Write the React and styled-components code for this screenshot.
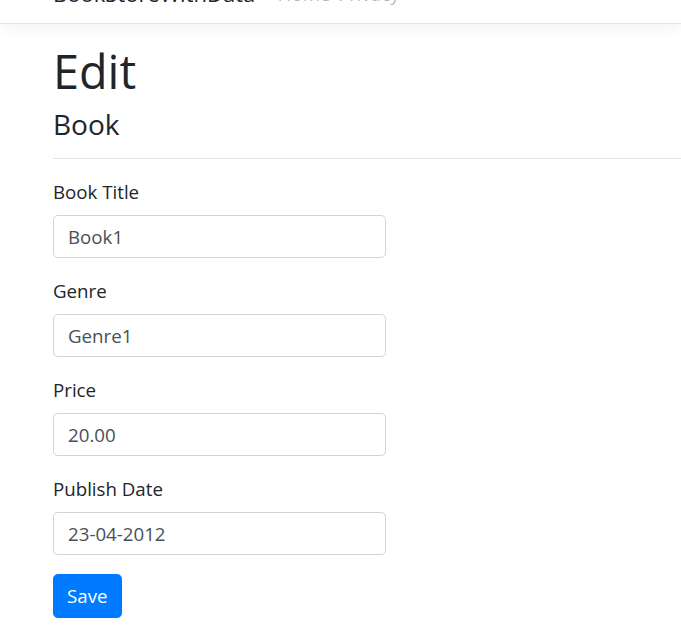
import React from "react";
import styled, { createGlobalStyle } from "styled-components";

const GlobalStyle = createGlobalStyle`
  html {
    font-size: 18.7px;
  }
  body {
    margin: 0;
    background: #fff;
    color: #212529;
    font-family: "Open Sans", "Noto Sans", "Liberation Sans", sans-serif;
    line-height: 1.5;
  }
  * {
    box-sizing: border-box;
  }
`;

const Header = styled.header`
  margin-top: -39px;
  background: #fff;
  border-bottom: 1px solid #e5e5e5;
  box-shadow: 0 0.25rem 0.75rem rgba(0, 0, 0, 0.05);
  margin-bottom: 1rem;
`;

const Nav = styled.nav`
  display: flex;
  align-items: center;
  padding: 0.5rem 0 6px 53px;
`;

const Brand = styled.a`
  font-size: 22px;
  line-height: 35px;
  padding: 0.3125rem 0;
  margin-right: 1rem;
  color: #212529;
  text-decoration: none;
`;

const NavLink = styled.a`
  color: rgba(0, 0, 0, 0.3);
  padding: 0.5rem 0.2rem;
  text-decoration: none;
`;

const Main = styled.main`
  padding: 0 0 1rem 53px;
`;

const Title = styled.h1`
  font-size: 2.5rem;
  font-weight: 400;
  line-height: 1.2;
  margin: 0 0 0.5rem;
`;

const Subtitle = styled.h4`
  font-size: 1.5rem;
  font-weight: 400;
  line-height: 1.2;
  margin: 0 0 0.5rem;
`;

const Rule = styled.hr`
  border: 0;
  border-top: 1px solid rgba(0, 0, 0, 0.1);
  margin: 16px 0 1rem;
`;

const Form = styled.form`
  width: 333px;
`;

const Group = styled.div`
  margin-bottom: 1rem;
`;

const Label = styled.label`
  display: inline-block;
  margin-bottom: 0.5rem;
`;

const Input = styled.input`
  display: block;
  width: 100%;
  height: 43px;
  padding: 0.375rem 0.75rem;
  font: inherit;
  font-size: 1rem;
  color: #495057;
  background: #fff;
  border: 1px solid #ced4da;
  border-radius: 0.25rem;
  outline: none;
`;

const Button = styled.button`
  font: inherit;
  font-size: 1rem;
  color: #fff;
  background: #007bff;
  border: 1px solid #007bff;
  border-radius: 0.25rem;
  padding: 0.375rem 0.7rem;
  line-height: 1.5;
`;

const BackLink = styled.a`
  color: #007bff;
  text-decoration: none;
`;

const fields = [
  { label: "Book Title", value: "Book1" },
  { label: "Genre", value: "Genre1" },
  { label: "Price", value: "20.00" },
  { label: "Publish Date", value: "23-04-2012" },
];

export default function App() {
  return (
    <>
      <GlobalStyle />
      <Header>
        <Nav>
          <Brand href="#">BookStoreWithData</Brand>
          <NavLink href="#">Home</NavLink>
          <NavLink href="#">Privacy</NavLink>
        </Nav>
      </Header>
      <Main>
        <Title>Edit</Title>
        <Subtitle>Book</Subtitle>
        <Rule />
        <Form onSubmit={(e) => e.preventDefault()}>
          {fields.map((f) => (
            <Group key={f.label}>
              <Label>{f.label}</Label>
              <Input defaultValue={f.value} />
            </Group>
          ))}
          <Group>
            <Button type="submit">Save</Button>
          </Group>
        </Form>
        <div>
          <BackLink href="#">Back to List</BackLink>
        </div>
      </Main>
    </>
  );
}
